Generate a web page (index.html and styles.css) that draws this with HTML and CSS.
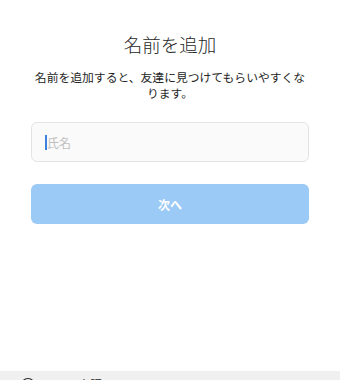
FILE: index.html
```html
<!DOCTYPE html>
<html lang="ja">
<head>
<meta charset="utf-8">
<link rel="stylesheet" href="styles.css">
</head>
<body>
<main class="page">
  <h1 class="title">名前を追加</h1>
  <p class="desc">名前を追加すると、友達に見つけてもらいやすくなります。</p>
  <div class="field"><span class="caret"></span><span class="placeholder">氏名</span></div>
  <button class="next" type="button">次へ</button>
</main>
<footer class="footer">
  <svg class="globe" width="16" height="16" viewBox="0 0 16 16"><circle cx="8" cy="8" r="6.5" fill="none" stroke="#262626" stroke-width="1.2"/></svg>
  <span class="lang">日本語</span>
</footer>
</body>
</html>
```
FILE: styles.css
```css
html, body {
  margin: 0;
  padding: 0;
  background: #fff;
  overflow: hidden;
}
body {
  width: 340px;
  height: 380px;
  font-family: "Noto Sans CJK JP", "Noto Sans", sans-serif;
  color: #262626;
}
.page {
  height: 371px;
  box-sizing: border-box;
  padding: 32px 31px 0;
  display: flex;
  flex-direction: column;
}
.title {
  margin: 0;
  font-size: 18.5px;
  line-height: 24px;
  font-weight: 300;
  text-align: center;
}
.desc {
  margin: 13px 0 0;
  padding: 0 2px;
  font-size: 11.8px;
  line-height: 16px;
  text-align: center;
  color: #262626;
}
.field {
  margin-top: 21px;
  height: 40px;
  box-sizing: border-box;
  border: 1px solid #e3e3e3;
  border-radius: 6px;
  background: #fafafa;
  display: flex;
  align-items: center;
  padding-left: 13px;
}
.caret {
  width: 2px;
  height: 15px;
  background: #3b82e0;
}
.placeholder {
  font-size: 12px;
  color: #c0c0c0;
}
.next {
  margin-top: 22px;
  height: 40px;
  border: none;
  border-radius: 6px;
  background: #9ccaf7;
  color: #fff;
  font-family: inherit;
  font-size: 12px;
  font-weight: 700;
  padding: 0;
}
.footer {
  height: 9px;
  overflow: hidden;
  background: #f0f0f0;
  display: flex;
  align-items: flex-start;
  padding: 6px 0 0 20px;
  gap: 30px;
}
.lang {
  font-size: 12px;
  line-height: 16px;
  color: #262626;
}
```
